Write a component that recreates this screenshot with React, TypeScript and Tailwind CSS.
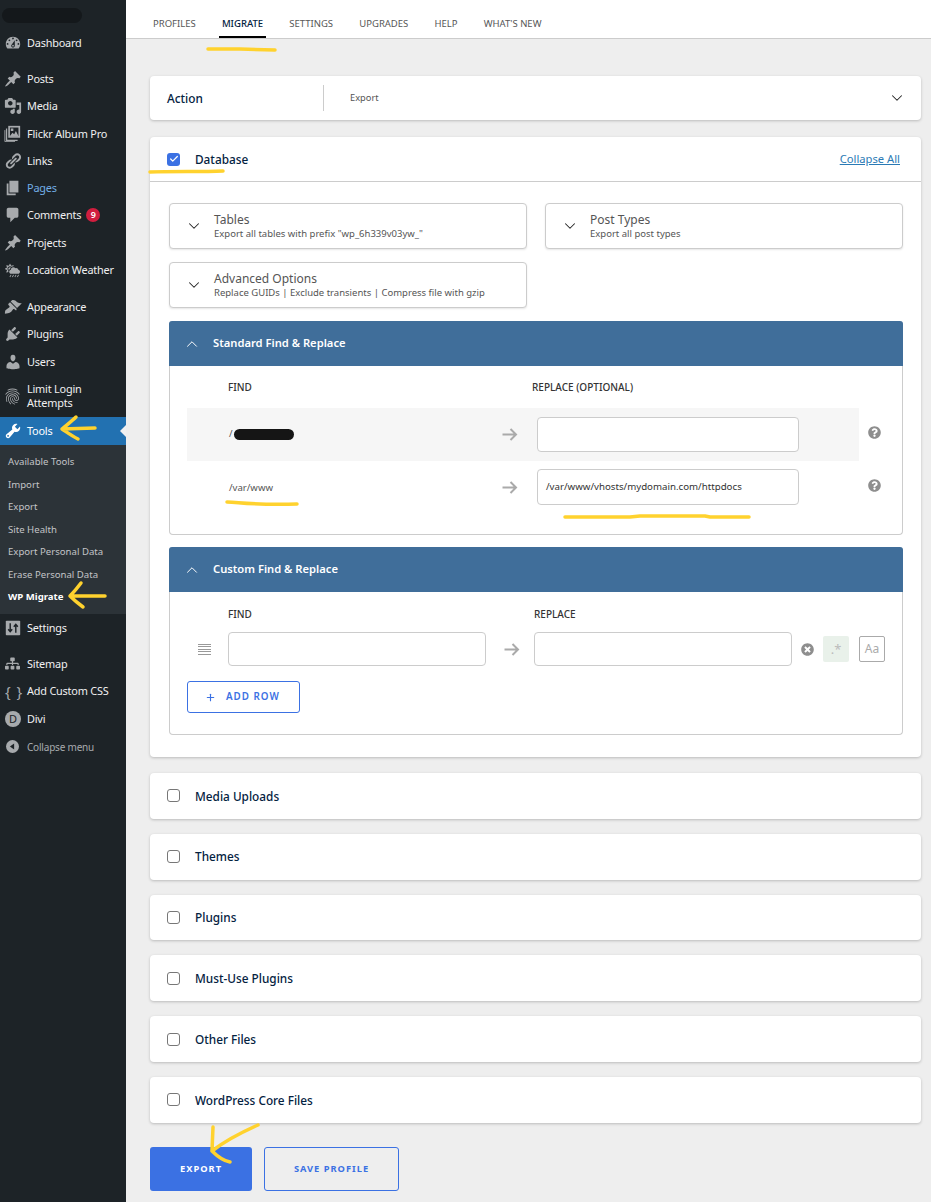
import React from "react";
import { ChevronDown, ChevronUp, Plus, Check } from "lucide-react";
import { FaCloudSunRain, FaSitemap, FaQuestionCircle, FaTimesCircle } from "react-icons/fa";
import { MdFingerprint } from "react-icons/md";

function DI({ d, white = false }: { d: string; white?: boolean }) {
  return (
    <svg viewBox="0 0 20 20" className={`w-[18px] h-[18px] -ml-[1px] ${white ? "text-white" : "text-[#a7aaad]"}`} fill="currentColor">
      <path d={d} />
    </svg>
  );
}

const D = {
  dashboard: "M3.76 16h12.48c1.1-1.37 1.76-3.11 1.76-5 0-4.42-3.58-8-8-8s-8 3.58-8 8c0 1.89.66 3.63 1.76 5zM10 4c.55 0 1 .45 1 1s-.45 1-1 1-1-.45-1-1 .45-1 1-1zM6 6c.55 0 1 .45 1 1s-.45 1-1 1-1-.45-1-1 .45-1 1-1zm8 0c.55 0 1 .45 1 1s-.45 1-1 1-1-.45-1-1 .45-1 1-1zm-5.37 5.55L12 7v6c0 1.1-.9 2-2 2s-2-.9-2-2c0-.57.24-1.08.63-1.45zM4 10c.55 0 1 .45 1 1s-.45 1-1 1-1-.45-1-1 .45-1 1-1zm12 0c.55 0 1 .45 1 1s-.45 1-1 1-1-.45-1-1 .45-1 1-1zm-5 3c0-.55-.45-1-1-1s-1 .45-1 1 .45 1 1 1 1-.45 1-1z",
  pin: "M10.44 3.02l1.82-1.82 6.36 6.35-1.83 1.82c-1.05-.68-2.48-.57-3.41.36l-.75.75c-.92.93-1.04 2.35-.35 3.41l-1.83 1.82-2.41-2.41-2.8 2.79c-.42.42-3.38 2.71-3.8 2.29s1.86-3.39 2.28-3.81l2.79-2.79L4.1 9.36l1.83-1.82c1.05.69 2.48.57 3.4-.36l.75-.75c.93-.92 1.05-2.35.36-3.41z",
  media: "M13 11V4c0-.55-.45-1-1-1h-1.67L9 1H5L3.67 3H2c-.55 0-1 .45-1 1v7c0 .55.45 1 1 1h10c.55 0 1-.45 1-1zM7 4.5c1.38 0 2.5 1.12 2.5 2.5S8.38 9.5 7 9.5 4.5 8.38 4.5 7 5.62 4.5 7 4.5zM14 6h5v10.5c0 1.38-1.12 2.5-2.5 2.5S14 17.88 14 16.5s1.12-2.5 2.5-2.5c.17 0 .34.02.5.05V9h-3V6zm-4 8.05V13h2v3.5c0 1.38-1.12 2.5-2.5 2.5S7 17.88 7 16.5 8.12 14 9.5 14c.17 0 .34.02.5.05z",
  links: "M17.74 2.76c1.68 1.69 1.68 4.41 0 6.1l-1.53 1.52c-1.12 1.12-2.7 1.47-4.14 1.09l2.62-2.61.76-.77.76-.76c.84-.84.84-2.2 0-3.04-.84-.85-2.2-.85-3.04 0l-.77.76-3.38 3.38c-.37-1.44-.02-3.02 1.1-4.14l1.52-1.53c1.69-1.68 4.42-1.68 6.1 0zM8.59 13.43l5.34-5.34c.42-.42.42-1.1 0-1.52-.44-.43-1.13-.39-1.53 0l-5.33 5.34c-.42.42-.42 1.1 0 1.52.44.43 1.13.39 1.52 0zm-.76 2.29l4.14-4.15c.38 1.44.03 3.02-1.09 4.14l-1.52 1.53c-1.69 1.68-4.41 1.68-6.1 0-1.68-1.68-1.68-4.42 0-6.1l1.53-1.52c1.12-1.12 2.7-1.47 4.14-1.1l-4.14 4.15c-.85.84-.85 2.2 0 3.05.84.84 2.2.84 3.04 0z",
  page: "M6 15V2h10v13H6zm-1 1h8v2H3V5h2v11z",
  comments: "M5 2h9c1.1 0 2 .9 2 2v7c0 1.1-.9 2-2 2h-2l-5 5v-5H5c-1.1 0-2-.9-2-2V4c0-1.1.9-2 2-2z",
  brush: "M14.48 11.06L7.41 3.99l1.5-1.5c.5-.56 2.3-.47 3.51.32 1.21.8 1.43 1.28 2.91 2.1 1.18.64 2.45 1.26 4.45.85zM13.77 11.77L6.7 4.7 4.93 6.47c-.39.39-.39 1.02 0 1.41l1.06 1.06c.39.39.39 1.03 0 1.42-.6.6-1.43 1.11-2.21 1.69-.35.26-.7.53-1.01.84C1.43 13.23 1 15 1 17.5 3 17.5 6 17 7.6 15.6c.31-.31.58-.66.84-1.01.58-.78 1.09-1.61 1.69-2.21.39-.39 1.03-.39 1.42 0l1.06 1.06c.39.39 1.02.39 1.41 0z",
  plugin: "M13.11 4.36L9.87 7.6 8 5.73l3.24-3.24c.35-.34 1.05-.2 1.56.32.52.51.66 1.21.31 1.55zm-8 1.77l.91-1.12 9.01 9.01-1.19.84c-.71.71-2.63 1.16-3.82 1.16H6.14L4.9 17.26c-.59.59-1.54.59-2.12 0-.59-.58-.59-1.53 0-2.12l1.24-1.24v-3.88c0-1.13.4-3.19 1.09-3.89zm7.26 3.97l3.24-3.24c.34-.35 1.04-.21 1.55.31.52.51.66 1.21.31 1.55l-3.24 3.25z",
  users: "M10 9.25c-2.27 0-2.73-3.44-2.73-3.44C7 4.02 7.82 2 9.97 2c2.16 0 2.98 2.02 2.71 3.81 0 0-.41 3.44-2.68 3.44zm0 2.57L12.72 10c2.39 0 4.52 2.33 4.52 4.53v2.49s-3.65 1.13-7.24 1.13c-3.65 0-7.24-1.13-7.24-1.13v-2.49c0-2.25 1.94-4.48 4.47-4.48z",
  tools: "M16.68 9.77c-1.34 1.34-3.3 1.67-4.95.99l-5.41 6.52c-.99.99-2.59.99-3.58 0s-.99-2.59 0-3.57l6.52-5.42c-.68-1.65-.35-3.61.99-4.95 1.28-1.28 3.12-1.62 4.72-1.06l-2.89 2.89 2.82 2.82 2.86-2.87c.53 1.58.18 3.39-1.08 4.65zM3.81 16.21c.4.39 1.04.39 1.43 0 .4-.4.4-1.04 0-1.43-.39-.4-1.03-.4-1.43 0-.39.39-.39 1.03 0 1.43z",
};

function FlickrIcon() {
  return (
    <svg viewBox="0 0 20 20" className="w-[17px] h-[17px] -ml-[1px]">
      <rect x="5" y="1" width="14" height="14" fill="#a7aaad" />
      <rect x="7" y="3" width="10" height="10" fill="#1d2327" />
      <path d="M7 13l3-4 2 2 2-4 3 6z M8 4h3v3H8z" fill="#a7aaad" />
      <path d="M3 4v14h13" stroke="#a7aaad" strokeWidth="1.5" fill="none" />
      <path d="M1 6v13.5h12" stroke="#a7aaad" strokeWidth="1" fill="none" />
    </svg>
  );
}
function SettingsIcon() {
  return (
    <svg viewBox="0 0 20 20" className="w-[16px] h-[16px]">
      <rect x="1" y="1" width="18" height="18" rx="1" fill="#a7aaad" />
      <path d="M6.5 4v10M4 11.5l2.5 3 2.5-3M13.5 16V6M11 8.5l2.5-3 2.5 3" stroke="#1d2327" strokeWidth="1.8" fill="none" />
    </svg>
  );
}
function CollapseIcon() {
  return (
    <svg viewBox="0 0 20 20" className="w-[13px] h-[13px]">
      <circle cx="10" cy="10" r="10" fill="#a7aaad" />
      <path d="M12.5 5.5v9L6 10z" fill="#1d2327" />
    </svg>
  );
}

function MenuItem({ icon, label, cls = "text-[#f0f0f1]", h = "h-[27.3px]", children }: { icon: React.ReactNode; label: React.ReactNode; cls?: string; h?: string; children?: React.ReactNode }) {
  return (
    <div className={`flex items-center ${h} pl-[5px]`}>
      <span className="w-[22px] flex items-center justify-start shrink-0">{icon}</span>
      <span className={`text-[10.9px] tracking-[-0.2px] leading-[14px] ${cls}`}>{label}</span>
      {children}
    </div>
  );
}

function Sidebar() {
  return (
    <aside className="relative w-[126px] shrink-0 bg-[#1d2327] h-[1202px] pt-[29.5px]">
      <div className="absolute left-[2px] top-[8px] w-[80px] h-[15px] rounded-full bg-[#14181b]" />
      <MenuItem icon={<DI d={D.dashboard} />} label="Dashboard" />
      <div className="h-[8.5px]" />
      <MenuItem icon={<DI d={D.pin} />} label="Posts" />
      <MenuItem icon={<DI d={D.media} />} label="Media" />
      <MenuItem icon={<FlickrIcon />} label="Flickr Album Pro" />
      <MenuItem icon={<DI d={D.links} />} label="Links" />
      <MenuItem icon={<DI d={D.page} />} label="Pages" cls="text-[#72aee6]" />
      <MenuItem icon={<DI d={D.comments} />} label="Comments">
        <span className="ml-[5px] w-[14px] h-[14px] rounded-full bg-[#d11e3f] text-white text-[9px] font-semibold leading-[14px] text-center">9</span>
      </MenuItem>
      <MenuItem icon={<DI d={D.pin} />} label="Projects" />
      <MenuItem icon={<FaCloudSunRain className="w-[15px] h-[15px] text-[#a7aaad]" />} label="Location Weather" />
      <div className="h-[9.6px]" />
      <MenuItem icon={<DI d={D.brush} />} label="Appearance" />
      <MenuItem icon={<DI d={D.plugin} />} label="Plugins" />
      <MenuItem icon={<DI d={D.users} />} label="Users" />
      <MenuItem icon={<MdFingerprint className="w-[19px] h-[19px] -ml-[2px] text-[#a7aaad]" />} label={<>Limit Login<br />Attempts</>} h="h-[42px]" />
      <div className="relative flex items-center h-[28px] pl-[5px] bg-[#2271b1]">
        <span className="w-[22px] flex items-center"><DI d={D.tools} white /></span>
        <span className="text-[10.9px] tracking-[-0.2px] text-white">Tools</span>
        <span className="absolute right-0 top-[8px] border-y-[6px] border-y-transparent border-r-[6px] border-r-[#f0f0f1]" />
      </div>
      <div className="bg-[#2c3338] h-[169px] pt-[6px] pl-[8px] text-[9.6px] text-[#c3c4c7]">
        {["Available Tools", "Import", "Export", "Site Health", "Export Personal Data", "Erase Personal Data"].map((t) => (
          <div key={t} className="h-[22.5px] flex items-center">{t}</div>
        ))}
        <div className="h-[22.5px] flex items-center font-bold text-white">WP Migrate</div>
      </div>
      <MenuItem icon={<SettingsIcon />} label="Settings" h="h-[28px]" />
      <div className="h-[8.2px]" />
      <MenuItem icon={<FaSitemap className="w-[15px] h-[15px] text-[#a7aaad]" />} label="Sitemap" />
      <MenuItem icon={<span className="text-[#a7aaad] text-[15px] leading-none tracking-[1px]">{"{ }"}</span>} label="Add Custom CSS" />
      <MenuItem icon={<span className="w-[16px] h-[16px] rounded-full bg-[#a7aaad] text-[#1d2327] text-[11px] leading-[16px] text-center">D</span>} label="Divi" />
      <div className="h-px" />
      <MenuItem icon={<span className="pl-[1px] flex"><CollapseIcon /></span>} label="Collapse menu" cls="!text-[10px] !text-[#a7aaad]" />
    </aside>
  );
}

function TopNav() {
  const tabs = ["PROFILES", "MIGRATE", "SETTINGS", "UPGRADES", "HELP", "WHAT'S NEW"];
  return (
    <div className="h-[39px] bg-white border-b border-[#ccc] flex pl-[27px] gap-[26.2px] text-[9.5px] text-[#575757]">
      {tabs.map((t) => (
        <div key={t} className={`relative flex items-center pt-[10px] ${t === "MIGRATE" ? "text-[#04223f] font-medium" : ""}`}>
          {t}
          {t === "MIGRATE" && <span className="absolute -left-[3px] -right-[3px] bottom-0 h-[2px] bg-black" />}
        </div>
      ))}
    </div>
  );
}

function Tile({ title, sub }: { title: string; sub: string }) {
  return (
    <div className="h-[46px] flex items-center bg-white border border-[#ccc] rounded-[4px] shadow-[0_1px_2px_rgba(0,0,0,0.1)]">
      <ChevronDown className="w-[18px] h-[18px] ml-[15px] text-[#222] shrink-0" strokeWidth={1.4} />
      <div className="ml-[11px] text-[#555]">
        <div className="text-[12px] leading-[14px]">{title}</div>
        <div className="text-[9.5px] leading-[12px] pt-[1px]">{sub}</div>
      </div>
    </div>
  );
}

function PanelHead({ title }: { title: string }) {
  return (
    <div className="h-[45px] bg-[#406e9a] rounded-t-[3px] -mx-px flex items-center pl-[14px]">
      <ChevronUp className="w-[18px] h-[18px] text-white" strokeWidth={1.3} />
      <span className="ml-[12px] text-[11.2px] font-semibold text-white">{title}</span>
    </div>
  );
}

function TextBox({ cls, children }: { cls: string; children?: React.ReactNode }) {
  return (
    <div className={`${cls} bg-white border border-[#ccc] rounded-[4px] flex items-center pl-[8px] text-[9.7px] text-[#333]`}>{children}</div>
  );
}

const Arrow = () => (
  <svg viewBox="0 0 17 17" className="w-[17px] h-[17px] shrink-0" fill="none" stroke="#aaa" strokeWidth="2">
    <path d="M1.5 8.5H15M9.5 3l5.5 5.5L9.5 14" />
  </svg>
);

function OptionCard({ label }: { label: string }) {
  return (
    <div className="h-[45.8px] bg-white rounded-[4px] shadow-[0_1px_3px_rgba(0,0,0,0.22)] flex items-center pl-[17px]">
      <span className="w-[13px] h-[13px] border border-[#777] rounded-[3px] bg-white" />
      <span className="ml-[15px] pt-[1px] text-[11.8px] font-medium text-[#04223f]">{label}</span>
    </div>
  );
}

function Annotations() {
  const paths = [
    "M208 49 L240 49 L275 50",
    "M150 172 C175 171 200 172 223 171",
    "M227 502 C240 502 245 505 297 504",
    "M565 517 L630 517 L640 516 L705 516 L710 517 L749 517",
    "M95 428 L62 429 M62 429 C68 424 72 421 76 417 M62 429 C68 433 72 436 78 439",
    "M105 596 L70 596 M70 596 C74 592 78 587 81 583 M70 596 C74 600 79 604 83 607",
    "M258 1125 C240 1133 225 1141 212 1151 M212 1151 L213 1127 M212 1151 C218 1157 224 1161 230 1162",
  ];
  return (
    <svg className="absolute left-0 top-0 pointer-events-none" width="931" height="1202" fill="none" stroke="#ffd22e" strokeWidth="3.5" strokeLinecap="round" strokeLinejoin="round">
      {paths.map((d) => <path key={d} d={d} />)}
    </svg>
  );
}

export default function App() {
  return (
    <div className="relative w-[931px] h-[1202px] overflow-hidden flex bg-[#eeeeee] font-['Noto_Sans',sans-serif]">
      <Sidebar />
      <main className="flex-1 min-w-0">
        <TopNav />
        <div className="pl-[24px] pr-[10px] pt-[37px]">
          <div className="h-[44px] bg-white rounded-[4px] shadow-[0_1px_3px_rgba(0,0,0,0.22)] flex items-center pl-[17px] pr-[15px]">
            <span className="w-[156px] pt-[1px] text-[11.8px] font-medium text-[#04223f]">Action</span>
            <span className="w-px h-[26px] bg-[#ccc]" />
            <span className="ml-[26px] flex-1 text-[9.3px] text-[#555]">Export</span>
            <ChevronDown className="w-[18px] h-[18px] text-[#222]" strokeWidth={1.4} />
          </div>

          <div className="mt-[17px] h-[620px] bg-white rounded-[4px] shadow-[0_1px_3px_rgba(0,0,0,0.22)]">
            <div className="h-[45px] border-b border-[#ccc] flex items-center pl-[17px] pr-[21px]">
              <span className="w-[13px] h-[13px] rounded-[3px] bg-[#3b71e3] flex items-center justify-center">
                <Check className="w-[10px] h-[10px] text-white" strokeWidth={3} />
              </span>
              <span className="ml-[15px] pt-[1px] flex-1 text-[11.8px] font-medium text-[#04223f]">Database</span>
              <span className="text-[11.2px] underline text-[#2a7ab5]">Collapse All</span>
            </div>
            <div className="pl-[19px] pr-[18px] pt-[21px]">
              <div className="grid grid-cols-2 gap-x-[18px] gap-y-[13px]">
                <Tile title="Tables" sub={'Export all tables with prefix "wp_6h339v03yw_"'} />
                <Tile title="Post Types" sub="Export all post types" />
                <Tile title="Advanced Options" sub="Replace GUIDs | Exclude transients | Compress file with gzip" />
              </div>

              <div className="mt-[13px] h-[214px] border border-[#ccc] border-t-0 rounded-[4px] bg-white">
                <PanelHead title="Standard Find & Replace" />
                <div className="flex h-[42px] pt-[1px] items-center text-[10px] text-[#333] font-medium">
                  <span className="ml-[58px] w-[304px]">FIND</span>
                  <span>REPLACE (OPTIONAL)</span>
                </div>
                <div className="relative ml-[17px] w-[672px] h-[53px] bg-[#f6f6f6] flex items-center">
                  <span className="ml-[42px] w-[272px] text-[9.6px] text-[#555]">/</span>
                  <Arrow />
                  <TextBox cls="ml-[19px] w-[262px] h-[35px]" />
                  <FaQuestionCircle className="absolute -right-[22px] top-[18px] w-[13px] h-[13px] text-[#8e8e8e]" />
                  <span className="absolute left-[47px] top-[21px] w-[60px] h-[11px] rounded-full bg-[#151515]" />
                </div>
                <div className="relative ml-[17px] w-[672px] h-[53px] flex items-center">
                  <span className="ml-[42px] w-[272px] pt-[1px] text-[9.6px] text-[#555]">/var/www</span>
                  <Arrow />
                  <TextBox cls="ml-[19px] w-[262px] h-[36px] -mt-[1px]">/var/www/vhosts/mydomain.com/httpdocs</TextBox>
                  <FaQuestionCircle className="absolute -right-[22px] top-[18px] w-[13px] h-[13px] text-[#8e8e8e]" />
                </div>
              </div>

              <div className="mt-[12px] h-[188px] border border-[#ccc] border-t-0 rounded-[4px] bg-white">
                <PanelHead title="Custom Find & Replace" />
                <div className="flex h-[40px] pt-[15px] text-[10px] text-[#333] font-medium">
                  <span className="ml-[58px] w-[306px]">FIND</span>
                  <span>REPLACE</span>
                </div>
                <div className="flex items-center h-[34px]">
                  <span className="ml-[28px] w-[13px] flex flex-col gap-[1.5px]">
                    {[0, 1, 2, 3, 4].map((i) => <span key={i} className="h-px bg-[#999]" />)}
                  </span>
                  <TextBox cls="ml-[17px] w-[258px] h-[34px]" />
                  <span className="ml-[17px] flex"><Arrow /></span>
                  <TextBox cls="ml-[14px] w-[258px] h-[34px]" />
                  <FaTimesCircle className="ml-[9px] w-[13px] h-[13px] text-[#8e8e8e]" />
                  <span className="ml-[9px] w-[26px] h-[26px] rounded-[2px] bg-[#e9f1ea] text-[#bbb] text-[13px] leading-[26px] text-center">.*</span>
                  <span className="ml-[10px] w-[26px] h-[26px] rounded-[2px] border border-[#aaa] text-[#aaa] text-[12px] leading-[24px] text-center">Aa</span>
                </div>
                <div className="ml-[17px] mt-[15px] w-[113px] h-[32px] border border-[#3b71e3] rounded-[3px] flex items-center pl-[17px] text-[#3b71e3]">
                  <Plus className="w-[11px] h-[11px]" strokeWidth={2.5} />
                  <span className="ml-[10px] pt-[1px] text-[9.8px] font-semibold tracking-[1px]">ADD ROW</span>
                </div>
              </div>
            </div>
          </div>

          <div className="mt-[16px] flex flex-col gap-[15px]">
            {["Media Uploads", "Themes", "Plugins", "Must-Use Plugins", "Other Files", "WordPress Core Files"].map((l) => (
              <OptionCard key={l} label={l} />
            ))}
          </div>

          <div className="mt-[24px] flex gap-[12px]">
            <div className="w-[102px] h-[44px] rounded-[3px] bg-[#3b71e3] text-white text-[9.3px] font-bold tracking-[1px] flex items-center justify-center">EXPORT</div>
            <div className="w-[135px] h-[44px] rounded-[3px] border border-[#3b71e3] text-[#3b71e3] text-[9.3px] font-bold tracking-[1px] flex items-center justify-center">SAVE PROFILE</div>
          </div>
        </div>
      </main>
      <Annotations />
    </div>
  );
}
